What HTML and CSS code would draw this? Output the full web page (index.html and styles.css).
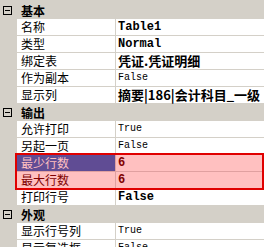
FILE: index.html
```html
<!DOCTYPE html>
<html lang="zh">
<head>
  <meta charset="UTF-8" />
  <meta name="viewport" content="width=device-width, initial-scale=1.0">
  <title>属性</title>
  <link rel="stylesheet" href="styles.css">
</head>
<body>

  <div class="props">
    <div class="cat">
      <svg class="toggle" width="9" height="9"><rect x="0.5" y="0.5" width="8" height="8" fill="none" stroke="#000"/><path d="M2 4.5h5" stroke="#000"/></svg>
      <span>基本</span>
    </div>
    <div class="row"><div class="name">名称</div><div class="val bold">Table1</div></div>
    <div class="row"><div class="name">类型</div><div class="val bold">Normal</div></div>
    <div class="row"><div class="name">绑定表</div><div class="val bold cn">凭证.凭证明细</div></div>
    <div class="row"><div class="name">作为副本</div><div class="val">False</div></div>
    <div class="row"><div class="name">显示列</div><div class="val bold cn">摘要|186|会计科目_一级</div></div>

    <div class="cat">
      <svg class="toggle" width="9" height="9"><rect x="0.5" y="0.5" width="8" height="8" fill="none" stroke="#000"/><path d="M2 4.5h5" stroke="#000"/></svg>
      <span>输出</span>
    </div>
    <div class="row"><div class="name">允许打印</div><div class="val">True</div></div>
    <div class="row"><div class="name">另起一页</div><div class="val">False</div></div>

    <div class="marked">
      <div class="row"><div class="name selected">最少行数</div><div class="val bold">6</div></div>
      <div class="row"><div class="name">最大行数</div><div class="val bold">6</div></div>
    </div>

    <div class="row"><div class="name">打印行号</div><div class="val bold">False</div></div>

    <div class="cat">
      <svg class="toggle" width="9" height="9"><rect x="0.5" y="0.5" width="8" height="8" fill="none" stroke="#000"/><path d="M2 4.5h5" stroke="#000"/></svg>
      <span>外观</span>
    </div>
    <div class="row"><div class="name">显示行号列</div><div class="val">True</div></div>
    <div class="row"><div class="name">显示复选框</div><div class="val">False</div></div>
  </div>

</body>
</html>
```

FILE: styles.css
```css
body {
  margin: 0;
  background: #d4d0c8;
  font-family: "Noto Sans CJK SC", sans-serif;
  font-size: 12px;
  color: #000;
  overflow: hidden;
}

.props {
  padding-top: 2px;
  width: 264px;
}

.cat {
  display: flex;
  align-items: center;
  height: 17px;
  padding-left: 3px;
  font-weight: bold;
  line-height: 17px;
}

.toggle {
  margin-right: 9px;
}

.row {
  display: flex;
  height: 17px;
  padding-left: 17px;
}

.name,
.val {
  background: #fff;
  border-bottom: 1px solid #d4d0c8;
  height: 16px;
  line-height: 16px;
  white-space: nowrap;
}

.name {
  width: 94px;
  padding-left: 4px;
  border-right: 1px solid #d4d0c8;
}

.val {
  flex: 1;
  min-width: 0;
  padding-left: 2px;
  font-family: "Liberation Mono", "Noto Sans CJK SC", monospace;
  font-size: 10px;
}

.val.bold {
  font-weight: bold;
  font-size: 12px;
}

.val.cn {
  font-family: "Noto Sans CJK SC", sans-serif;
  font-size: 13px;
}

/* highlighted pair of rows */
.marked {
  position: relative;
  margin: -2px 0 -1px 15px;
  border: 2px solid #e00000;
}

.marked .row {
  padding-left: 0;
}

.marked .name,
.marked .val {
  background: #ffc0c0;
  color: #800000;
  border-color: #e0a0a0;
}

.marked .row:last-child {
  height: 16px;
}

.marked .row:last-child .name,
.marked .row:last-child .val {
  border-bottom: none;
}

.marked .name.selected {
  background: #604c94;
  color: #ffc0c0;
}
```
